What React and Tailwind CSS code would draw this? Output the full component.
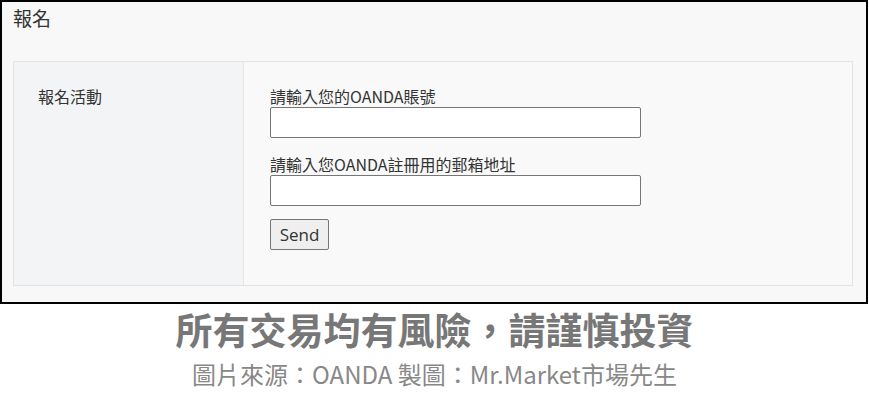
export default function App() {
  const font = { fontFamily: '"Noto Sans CJK TC", "Noto Sans", sans-serif' }
  return (
    <div className="w-[869px] h-[402px] bg-white" style={font}>
      <div className="w-[868px] h-[304px] border-2 border-black bg-[#f8f8f8] flex flex-col">
        <h2 className="pl-[11px] pt-[3px] text-[19px] leading-[26px] text-[#333]">報名</h2>
        <div className="ml-[11px] mt-[30px] w-[840px] h-[225px] border border-[#e3e3e3] flex">
          <div className="w-[230px] shrink-0 bg-[#f3f4f5] border-r border-[#e6e6e6] pl-[24px] pt-[23px] text-[16px] leading-[22px] text-[#333]">
            報名活動
          </div>
          <div className="flex-1 bg-[#f9f9f9] pl-[26px] pt-[24px] text-[#333]">
            <label className="block text-[16px] leading-[21px]">請輸入您的OANDA賬號</label>
            <input className="block w-[371px] h-[31px] bg-white border border-[#767676] rounded-[2px]" />
            <label className="block mt-[16px] text-[16px] leading-[21px]">請輸入您OANDA註冊用的郵箱地址</label>
            <input className="block w-[371px] h-[31px] bg-white border border-[#767676] rounded-[2px]" />
            <button className="block mt-[13px] w-[59px] h-[31px] bg-[#efefef] border border-[#767676] rounded-[2px] text-[17px] text-[#333]" style={{ fontFamily: '"Open Sans", sans-serif' }}>Send</button>
          </div>
        </div>
      </div>
      <div className="flex flex-col items-center text-center">
        <p className="mt-[5px] text-[37px] leading-[40px] font-bold text-[#777]">所有交易均有風險，請謹慎投資</p>
        <p className="mt-[11px] text-[24px] leading-[28px] text-[#888]">圖片來源：OANDA 製圖：Mr.Market市場先生</p>
      </div>
    </div>
  )
}
